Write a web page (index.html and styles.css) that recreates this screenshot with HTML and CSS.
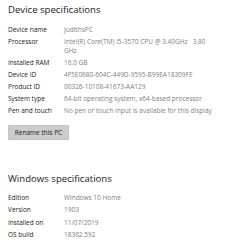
FILE: index.html
```html
<!DOCTYPE html>
<html>
<head>
<meta charset="utf-8">
<link rel="stylesheet" href="styles.css">
</head>
<body>
<div class="page">
  <h2 class="title">Device specifications</h2>
  <div class="specs">
    <div class="label">Device name</div><div class="value">JudithsPC</div>
    <div class="label">Processor</div><div class="value">Intel(R) Core(TM) i5-3570 CPU @ 3.40GHz &nbsp; 3.80 GHz</div>
    <div class="label">Installed RAM</div><div class="value">16.0 GB</div>
    <div class="label">Device ID</div><div class="value">4F5E0680-604C-449D-9595-B99EA18309FE</div>
    <div class="label">Product ID</div><div class="value">00326-10108-41673-AA129</div>
    <div class="label">System type</div><div class="value">64-bit operating system, x64-based processor</div>
    <div class="label">Pen and touch</div><div class="value nowrap">No pen or touch input is available for this display</div>
  </div>
  <button class="btn">Rename this PC</button>
  <h2 class="title title2">Windows specifications</h2>
  <div class="specs specs2">
    <div class="label">Edition</div><div class="value">Windows 10 Home</div>
    <div class="label">Version</div><div class="value">1903</div>
    <div class="label">Installed on</div><div class="value">11/07/2019</div>
    <div class="label">OS build</div><div class="value">18362.592</div>
  </div>
</div>
</body>
</html>
```

FILE: styles.css
```css
html, body {
  margin: 0;
  padding: 0;
  background: #ffffff;
  overflow: hidden;
}
.page {
  padding: 3px 0 0 8px;
  font-family: "Open Sans", "Noto Sans", sans-serif;
  width: 238px;
}
.title {
  margin: 0;
  font-size: 9.6px;
  font-weight: 400;
  color: #1a1a1a;
  line-height: 13px;
}
.specs {
  display: grid;
  grid-template-columns: 56px 150px;
  row-gap: 3px;
  margin-top: 9px;
  font-size: 6.5px;
  line-height: 9px;
}
.specs2 {
  margin-top: 8px;
  row-gap: 3.3px;
}
.label {
  color: #222;
  white-space: nowrap;
}
.value {
  color: #808080;
}
.value.nowrap {
  white-space: nowrap;
}
.btn {
  display: block;
  margin-top: 10px;
  width: 61px;
  height: 15px;
  padding: 0;
  background: #cccccc;
  border: 1px solid #c6c6c6;
  font-family: "Open Sans", "Noto Sans", sans-serif;
  font-size: 6.5px;
  color: #222;
}
.title2 {
  margin-top: 32px;
}
```
